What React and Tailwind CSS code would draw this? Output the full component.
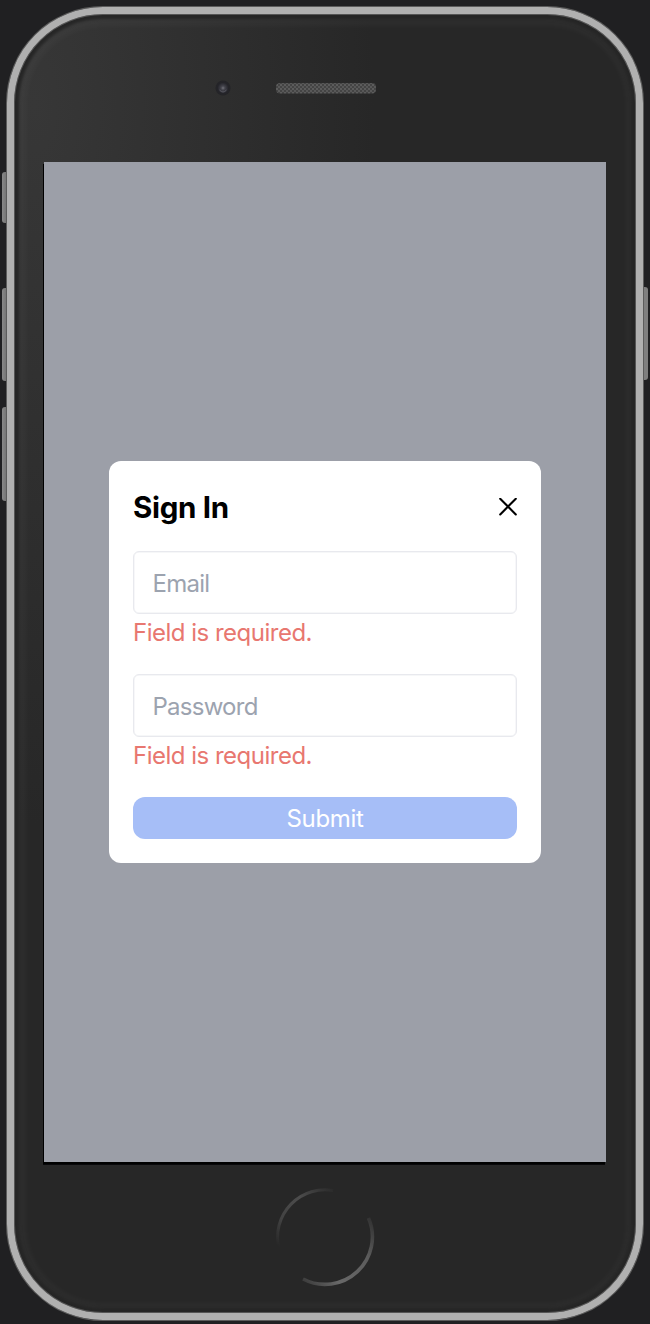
import React from "react";

function Field({ type, placeholder }) {
  return (
    <div className="h-[123px]">
      <input
        type={type}
        placeholder={placeholder}
        className="block h-[63px] w-full rounded-[6px] border-[1.5px] border-[#e8e9ee] bg-white pt-[2px] pl-[18.5px] text-[24px] tracking-[-0.75px] text-gray-900 shadow-[inset_0_0_0_0.5px_#eeeff2] outline-none placeholder:text-[#9ca3af]"
      />
      <p className="pt-[1px] text-[24px] leading-9 tracking-[-0.5px] text-[#e87770]">
        <span>Field is required.</span>
      </p>
    </div>
  );
}

function SignIn() {
  return (
    <form className="h-[402px] w-[432px] rounded-[12px] bg-white px-6 pt-6" onSubmit={(e) => e.preventDefault()}>
      <div className="flex h-[66px] items-start justify-between">
        <h1 className="text-[29.5px] leading-[44px] font-bold tracking-[-0.3px] text-black">Sign In</h1>
        <button type="button" aria-label="Close" className="pt-[13px]">
          <svg width="18" height="18" viewBox="0 0 18 18" fill="none" stroke="#000" strokeWidth="2.1" strokeLinecap="round">
            <path d="M1.2 .8 16.8 16.4M16.8 .8 1.2 16.4" />
          </svg>
        </button>
      </div>
      <Field type="email" placeholder="Email" />
      <Field type="password" placeholder="Password" />
      <button type="submit" className="block h-[42px] w-full rounded-[12px] bg-[#a6bef7] pt-[1px] text-[24px] leading-[42px] tracking-[-0.3px] text-white">
        Submit
      </button>
    </form>
  );
}

function Earpiece() {
  return (
    <svg width="170" height="24" viewBox="0 0 170 24" className="ml-[198px]">
      <defs>
        <pattern id="mesh" width="4" height="4" patternUnits="userSpaceOnUse">
          <rect width="4" height="4" fill="#444" />
          <rect width="2" height="2" fill="#5c5c5c" />
          <rect x="2" y="2" width="2" height="2" fill="#585858" />
        </pattern>
        <radialGradient id="lens">
          <stop offset="0" stopColor="#74747c" />
          <stop offset=".35" stopColor="#44444c" />
          <stop offset=".65" stopColor="#34343b" />
          <stop offset="1" stopColor="#232329" />
        </radialGradient>
      </defs>
      <circle cx="11" cy="12" r="7.5" fill="#242428" />
      <circle cx="11" cy="12" r="5.5" fill="url(#lens)" />
      <path d="M7.5 14q3.5 4 7 0" fill="none" stroke="#5a5a62" />
      <rect x="64" y="7" width="100" height="10.5" rx="4" fill="url(#mesh)" />
    </svg>
  );
}

function HomeButton() {
  return (
    <svg width="100" height="100" viewBox="0 0 100 100" fill="none">
      <defs>
        <linearGradient id="upper" x1="2" y1="58" x2="62" y2="2" gradientUnits="userSpaceOnUse">
          <stop offset="0" stopColor="#272727" />
          <stop offset=".25" stopColor="#424242" />
          <stop offset=".6" stopColor="#4c4c4c" />
          <stop offset="1" stopColor="#272727" />
        </linearGradient>
        <linearGradient id="lower" x1="95" y1="24" x2="26" y2="92" gradientUnits="userSpaceOnUse">
          <stop offset="0" stopColor="#2c2c2c" />
          <stop offset=".35" stopColor="#5c5c5c" />
          <stop offset=".75" stopColor="#686868" />
          <stop offset="1" stopColor="#3c3c3c" />
        </linearGradient>
      </defs>
      <path d="M3.5 60A47.5 47.5 0 0 1 58 3.5" stroke="url(#upper)" strokeWidth="3" />
      <path d="M93.5 31A47.5 47.5 0 0 1 28 92" stroke="url(#lower)" strokeWidth="3.6" />
    </svg>
  );
}

export default function App() {
  return (
    <div className="relative h-[1324px] w-[650px] overflow-hidden bg-[#202022] pt-[7px] pl-[7px] font-['Inter',sans-serif]">
      <div className="absolute top-[172px] left-[2px] h-[51px] w-[6px] rounded-l-[3px] bg-[linear-gradient(90deg,#898989,#6c6c6c)]" />
      <div className="absolute top-[288px] left-[2px] h-[93px] w-[6px] rounded-l-[3px] bg-[linear-gradient(90deg,#898989,#6c6c6c)]" />
      <div className="absolute top-[407px] left-[2px] h-[94px] w-[6px] rounded-l-[3px] bg-[linear-gradient(90deg,#898989,#6c6c6c)]" />
      <div className="absolute top-[287px] left-[642px] h-[93px] w-[6px] rounded-r-[3px] bg-[#7f7f7f]" />
      <div className="relative h-[1313px] w-[636px] rounded-[96px] border-[7px] border-[#b0b0b0] bg-[radial-gradient(ellipse_340px_720px_at_20px_90px,#373737,#272727)] shadow-[0_0_0_1px_#5c5c5c,inset_0_0_0_1px_#555,inset_0_0_3px_5px_#262626,inset_1px_1px_7px_10px_#ffffff0a]">
        <div className="flex h-[148px] items-start pt-[62px]">
          <Earpiece />
        </div>
        <main className="ml-[30px] flex h-[1000px] w-[562px] items-center justify-center bg-[#9c9fa8] shadow-[-1px_2px_0_#000,-1px_3px_0_#08080a]">
          <SignIn />
        </main>
        <div className="flex h-[151px] items-start justify-center pt-[25px]">
          <HomeButton />
        </div>
      </div>
    </div>
  );
}
